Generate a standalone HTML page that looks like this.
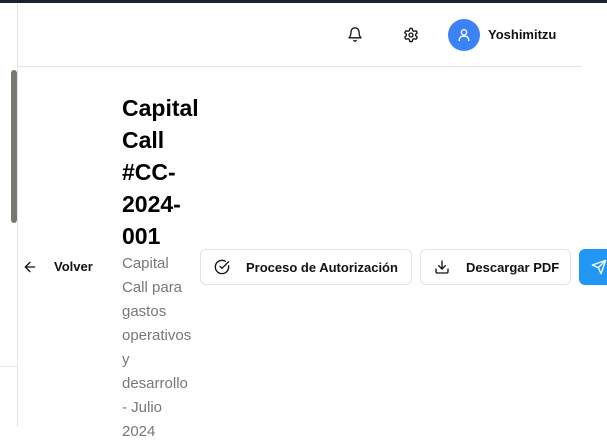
<!DOCTYPE html>
<html><head><meta charset="utf-8"><style>
*{margin:0;padding:0;box-sizing:border-box}
body{width:607px;height:427px;overflow:hidden;background:#fff;font-family:"Liberation Sans",sans-serif;position:relative}
.top{position:absolute;left:0;top:0;width:607px;height:3px;background:#1c2130}
.side{position:absolute;left:0;top:3px;width:18px;height:424px;border-right:1px solid #e5e5e5;background:#fff}
.scroll{position:absolute;left:11px;top:67px;width:6px;height:153px;background:#7a7670;border-radius:3px}
.sline{position:absolute;left:0;top:363px;width:18px;height:1px;background:#e5e5e5}
.hline{position:absolute;left:18px;top:66px;width:564px;height:1px;background:#e5e5e5}
.abs{position:absolute}
.title{left:122px;top:92px;width:82px;font-size:23px;font-weight:bold;line-height:32px;color:#000}
.sub{left:122px;top:252px;white-space:nowrap;font-size:15px;line-height:24px;color:#777}
.btn{position:absolute;top:249px;height:36px;border:1px solid #e2e2e2;border-radius:6px;font-size:13px;font-weight:bold;color:#111;display:flex;align-items:center}
</style></head><body>
<div class="top"></div>
<div class="side"><div class="scroll"></div><div class="sline"></div></div>
<div class="hline"></div>
<svg class="abs" style="left:347px;top:26px" width="16" height="17" viewBox="0 0 24 24" fill="none" stroke="#111" stroke-width="2" stroke-linecap="round" stroke-linejoin="round"><path d="M6 8a6 6 0 0 1 12 0c0 7 3 9 3 9H3s3-2 3-9"/><path d="M10.3 21a1.94 1.94 0 0 0 3.4 0"/></svg>
<svg class="abs" style="left:403px;top:27px" width="16" height="16" viewBox="0 0 24 24" fill="none" stroke="#111" stroke-width="2"><path d="M12.22 2h-.44a2 2 0 0 0-2 2v.18a2 2 0 0 1-1 1.73l-.43.25a2 2 0 0 1-2 0l-.15-.08a2 2 0 0 0-2.730.73l-.22.38a2 2 0 0 0 .73 2.73l.15.1a2 2 0 0 1 1 1.72v.51a2 2 0 0 1-1 1.74l-.15.09a2 2 0 0 0-.73 2.73l.22.38a2 2 0 0 0 2.73.73l.15-.08a2 2 0 0 1 2 0l.43.25a2 2 0 0 1 1 1.73V20a2 2 0 0 0 2 2h.44a2 2 0 0 0 2-2v-.18a2 2 0 0 1 1-1.73l.43-.25a2 2 0 0 1 2 0l.15.08a2 2 0 0 0 2.73-.73l.22-.39a2 2 0 0 0-.73-2.730l-.15-.08a2 2 0 0 1-1-1.74v-.5a2 2 0 0 1 1-1.74l.15-.09a2 2 0 0 0 .73-2.73l-.22-.38a2 2 0 0 0-2.73-.73l-.15.08a2 2 0 0 1-2 0l-.43-.25a2 2 0 0 1-1-1.73V4a2 2 0 0 0-2-2z"/><circle cx="12" cy="12" r="3"/></svg>
<div class="abs" style="left:448px;top:19px;width:32px;height:32px;border-radius:50%;background:#3b82f6"></div>
<svg class="abs" style="left:456px;top:27px" width="16" height="16" viewBox="0 0 24 24" fill="none" stroke="#fff" stroke-width="2"><circle cx="12" cy="8" r="4"/><path d="M5 21v-2a5 5 0 0 1 5-5h4a5 5 0 0 1 5 5v2"/></svg>
<div class="abs" style="left:488px;top:27px;font-size:13px;font-weight:bold;color:#111">Yoshimitzu</div>
<div class="abs title">Capital Call #CC-2024-001</div>
<div class="abs sub">Capital<br>Call para<br>gastos<br>operativos<br>y<br>desarrollo<br>- Julio<br>2024</div>
<svg class="abs" style="left:22px;top:259px" width="16" height="16" viewBox="0 0 24 24" fill="none" stroke="#111" stroke-width="2" stroke-linecap="round"><path d="M19 12H5M12 19l-7-7 7-7"/></svg>
<div class="abs" style="left:54px;top:259px;font-size:13px;font-weight:bold;color:#111">Volver</div>
<div class="btn" style="left:200px;width:212px"><svg style="margin-left:13px" width="16" height="16" viewBox="0 0 24 24" fill="none" stroke="#111" stroke-width="2" stroke-linecap="round"><path d="M21.8 10A10 10 0 1 1 17 3.3"/><path d="M9 11l3 3L22 4"/></svg><span style="margin-left:16px">Proceso de Autorización</span></div>
<div class="btn" style="left:420px;width:151px"><svg style="margin-left:13px" width="16" height="16" viewBox="0 0 24 24" fill="none" stroke="#111" stroke-width="2" stroke-linecap="round"><path d="M21 15v4a2 2 0 0 1-2 2H5a2 2 0 0 1-2-2v-4M7 10l5 5 5-5M12 15V3"/></svg><span style="margin-left:16px">Descargar PDF</span></div>
<div class="abs" style="left:579px;top:249px;width:40px;height:36px;background:#2196f3;border-radius:6px"></div>
<svg class="abs" style="left:591px;top:259px" width="16" height="16" viewBox="0 0 24 24" fill="none" stroke="#fff" stroke-width="2" stroke-linejoin="round"><path d="M22 2L11 13M22 2l-7 20-4-9-9-4 20-7z"/></svg>
</body></html>
